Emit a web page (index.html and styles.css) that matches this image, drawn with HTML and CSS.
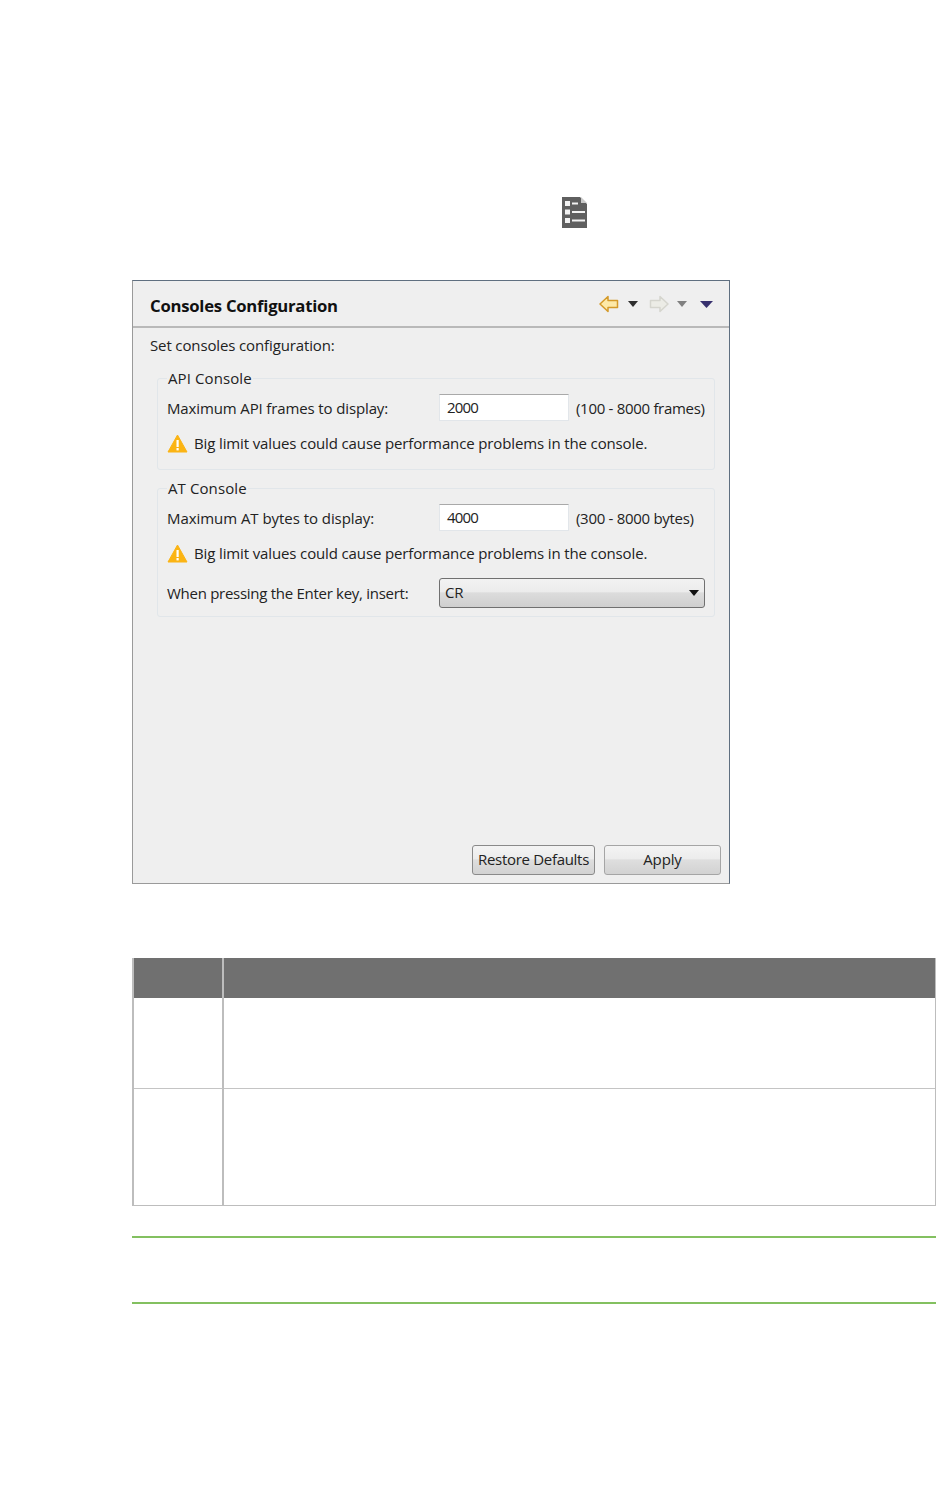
FILE: index.html
```html
<!DOCTYPE html>
<html lang="en">
<head>
<meta charset="utf-8">
<title>Consoles Configuration</title>
<link rel="stylesheet" href="styles.css">
</head>
<body>
<div class="page">
  <div class="doc-icon-row">
    <svg class="doc-icon" width="26" height="32" viewBox="0 0 26 32">
      <path d="M0 1H18L25 8V32H0Z" fill="#5f5f5f"/>
      <path d="M19 1L25 7H19Z" fill="#c9c9c9"/>
      <rect x="3" y="5" width="5" height="5" fill="#f2f2f2"/>
      <rect x="10" y="6.500" width="6" height="2" fill="#f2f2f2"/>
      <rect x="3" y="13.500" width="5" height="5" fill="#f2f2f2"/>
      <rect x="10" y="15" width="13" height="2" fill="#f2f2f2"/>
      <rect x="3" y="22" width="5" height="5" fill="#f2f2f2"/>
      <rect x="10" y="23.500" width="13" height="2" fill="#f2f2f2"/>
    </svg>
  </div>

  <div class="dialog">
    <div class="title-bar">
      <span class="title">Consoles Configuration</span>
      <div class="nav-icons">
        <svg class="arrow" width="20" height="18" viewBox="0 0 20 18"><path d="M1 9L9 1.500V5.500H18.500V12.500H9V16.500Z" fill="#fde9a8" stroke="#d49a2a" stroke-width="1.500" stroke-linejoin="round"/></svg>
        <svg class="caret" width="10" height="6" viewBox="0 0 10 6"><path d="M0 0H10L5 6Z" fill="#2e2e2e"/></svg>
        <svg class="arrow fwd" width="20" height="18" viewBox="0 0 20 18"><path d="M19 9L11 1.500V5.500H1.500V12.500H11V16.500Z" fill="#ecece6" stroke="#d5d5ce" stroke-width="1.500" stroke-linejoin="round"/></svg>
        <svg class="caret" width="10" height="6" viewBox="0 0 10 6"><path d="M0 0H10L5 6Z" fill="#808080"/></svg>
        <svg class="caret menu" width="13" height="7" viewBox="0 0 13 7"><path d="M0 0H13L6.500 7Z" fill="#37306e"/></svg>
      </div>
    </div>
    <div class="dialog-body">
      <p class="intro">Set consoles configuration:</p>

      <fieldset class="group api">
        <legend>API Console</legend>
        <div class="row">
          <label class="label">Maximum API frames to display:</label>
          <span class="input">2000</span>
          <span class="hint">(100 - 8000 frames)</span>
        </div>
        <div class="warn">
          <svg width="21" height="19" viewBox="0 0 21 19"><path d="M10.500 1L20 18H1Z" fill="#fbb414" stroke="#fbb414" stroke-linejoin="round"/><rect x="9.500" y="6" width="2.200" height="7" fill="#fff"/><rect x="9.500" y="14" width="2.200" height="2.400" fill="#fff"/></svg>
          <span>Big limit values could cause performance problems in the console.</span>
        </div>
      </fieldset>

      <fieldset class="group at">
        <legend>AT Console</legend>
        <div class="row">
          <label class="label wide">Maximum AT bytes to display:</label>
          <span class="input">4000</span>
          <span class="hint">(300 - 8000 bytes)</span>
        </div>
        <div class="warn">
          <svg width="21" height="19" viewBox="0 0 21 19"><path d="M10.500 1L20 18H1Z" fill="#fbb414" stroke="#fbb414" stroke-linejoin="round"/><rect x="9.500" y="6" width="2.200" height="7" fill="#fff"/><rect x="9.500" y="14" width="2.200" height="2.400" fill="#fff"/></svg>
          <span>Big limit values could cause performance problems in the console.</span>
        </div>
        <div class="row select-row">
          <label class="label tight">When pressing the Enter key, insert:</label>
          <div class="select">
            <span>CR</span>
            <svg width="10" height="6" viewBox="0 0 10 6"><path d="M0 0H10L5 6Z" fill="#111"/></svg>
          </div>
        </div>
      </fieldset>

      <div class="buttons">
        <button class="btn restore">Restore Defaults</button>
        <button class="btn apply">Apply</button>
      </div>
    </div>
  </div>

  <table class="data">
    <thead>
      <tr class="head"><th class="c1"></th><th></th></tr>
    </thead>
    <tbody>
      <tr class="r1"><td></td><td></td></tr>
      <tr class="r2"><td></td><td></td></tr>
    </tbody>
  </table>

  <div class="note"></div>
</div>
</body>
</html>
```
FILE: styles.css
```css
* { box-sizing: border-box; }
html, body { margin: 0; padding: 0; background: #fff; }
body { height: 1494px; overflow: hidden; font-family: "Open Sans", "Noto Sans", sans-serif; color: #222; }
.page { padding: 196px 0 0 132px; }

.doc-icon-row { height: 84px; padding-left: 430px; }
.doc-icon { display: block; }

.dialog {
  width: 598px; height: 604px;
  background: #efefef;
  border: 1px solid #9a9a9a;
  border-top-color: #5f6f80;
  border-right-color: #5f6f80;
  display: flex; flex-direction: column;
}
.title-bar {
  height: 47px; flex: none;
  border-bottom: 2px solid #b9b9b9;
  display: flex; align-items: center; justify-content: space-between;
  padding: 4px 16px 0 17px;
}
.title { font-size: 16.700px; font-weight: 700; color: #111; letter-spacing: -0.250px; }
.nav-icons { display: flex; align-items: center; height: 20px; margin-top: -3px; }
.arrow { margin-right: 9px; }
.caret { margin-right: 11px; }
.arrow.fwd { margin-right: 8px; }
.arrow.fwd + .caret { margin-right: 13px; }
.caret.menu { margin-right: 0; }

.dialog-body { flex: 1; display: flex; flex-direction: column; padding: 0 8px 0 17px; }
.intro { margin: 7px 0 13px; font-size: 15px; line-height: 20px; letter-spacing: -0.130px; }

.group {
  margin: 0 0 8px 7px; padding: 0 9px;
  width: 558px; min-width: 0;
  border: 1px solid #e1e6ea;
  border-radius: 3px;
}
.group legend { padding: 0 1px; margin-left: 0; font-size: 15px; line-height: 20px; letter-spacing: 0.100px; }
.group.api { height: 102px; }
.group.at { height: 139px; }

.row { display: flex; align-items: center; height: 27px; margin-top: 6px; font-size: 15px; letter-spacing: -0.130px; }
.label { width: 272px; flex: none; }
.label.wide { letter-spacing: -0.050px; }
.label.tight { letter-spacing: -0.280px; }
.input {
  width: 130px; height: 27px; flex: none;
  background: #fff; border: 1px solid #e2e6ea; border-top-color: #a9a9a9;
  padding-left: 7px; line-height: 25px; letter-spacing: -0.800px;
  margin-right: 7px;
}
.hint { white-space: nowrap; letter-spacing: -0.300px; }
.warn { display: flex; align-items: center; gap: 6px; height: 24px; margin-top: 10px; font-size: 15px; letter-spacing: -0.130px; }
.warn svg { flex: none; margin-top: 1px; }

.select-row { height: 30px; margin-top: 13px; }
.select {
  width: 266px; height: 30px;
  border: 1px solid #707070; border-radius: 3px;
  background: linear-gradient(#f2f2f2 0%, #ececec 45%, #dcdcdc 50%, #cfcfcf 100%);
  display: flex; align-items: center; justify-content: space-between;
  padding: 0 5px 2px 5px;
}
.select svg { margin-top: 2px; }

.buttons { margin-top: auto; display: flex; gap: 9px; padding-bottom: 8px; }
.btn {
  height: 30px; padding: 0 0 2px;
  font: inherit; font-size: 15px; letter-spacing: -0.130px; color: #222;
  border: 1px solid #8a8a8a; border-radius: 3px;
  background: linear-gradient(#f4f4f4 0%, #ececec 45%, #dedede 50%, #d2d2d2 100%);
}
.restore { width: 123px; margin-left: 322px; letter-spacing: -0.300px; }
.apply { width: 117px; border-color: #a5a5a5; }

.data {
  margin-top: 74px; width: 804px;
  border-collapse: separate; border-spacing: 0;
  table-layout: fixed;
  border-left: 2px solid #bdbdbd; border-right: 1px solid #bdbdbd; border-bottom: 1px solid #bdbdbd;
}
.data th, .data td { padding: 0; }
.data .c1 { width: 90px; }
.data th:first-child, .data td:first-child { border-right: 2px solid #bdbdbd; }
.head th { height: 40px; background: #707070; }
.r1 td { height: 91px; border-bottom: 1px solid #c4c4c4; }
.r2 td { height: 116px; }

.note {
  margin-top: 30px; width: 804px; height: 68px;
  border-top: 2px solid #83c060; border-bottom: 2px solid #83c060;
}
```
